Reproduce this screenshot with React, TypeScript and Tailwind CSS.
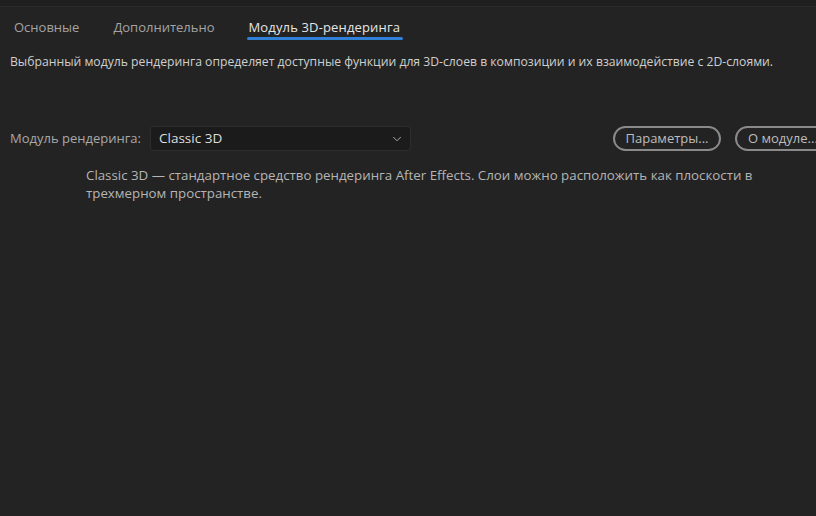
import { ChevronDown } from 'lucide-react'

export default function App() {
  const tabs = ['Основные', 'Дополнительно', 'Модуль 3D-рендеринга']
  const active = 2

  return (
    <div
      className="w-[816px] h-[516px] overflow-hidden bg-[#232323] text-[#c8c8c8]"
      style={{ fontFamily: '"Open Sans", "Noto Sans", sans-serif' }}
    >
      <div className="h-[7px] bg-[#1f1f1f] border-b border-[#2b2b2b]" />
      <nav className="flex gap-[34px] pl-[14px] pt-[10px] h-[34px]">
        {tabs.map((tab, i) => (
          <div
            key={tab}
            className={`text-[13px] leading-[20px] ${
              i === active ? 'text-[#e6e6e6] tracking-[0.15px]' : 'text-[#a3a3a3]'
            }`}
          >
            <div>{tab}</div>
            <div className={`h-[3px] -ml-[1px] -mr-[3px] rounded-full ${i === active ? 'bg-[#2f80d6]' : ''}`} />
          </div>
        ))}
      </nav>
      <p className="pl-[10px] pt-[13px] text-[12.2px] leading-[16px] text-[#cfcfcf] whitespace-nowrap">
        Выбранный модуль рендеринга определяет доступные функции для 3D-слоев в композиции и их взаимодействие с 2D-слоями.
      </p>
      <div className="flex items-center mt-[56px] pl-[10px] h-[25px]">
        <span className="shrink-0 text-[13px] text-[#a8a8a8] w-[140px]">Модуль рендеринга:</span>
        <div className="shrink-0 flex items-center justify-between w-[261px] h-[25px] rounded-[4px] bg-[#1b1b1b] border border-[#2e2e2e] pl-[8px] pr-[6px]">
          <span className="text-[13.5px] text-[#dedede]">Classic 3D</span>
          <ChevronDown size={14} strokeWidth={1.5} className="text-[#bdbdbd]" />
        </div>
        <button className="shrink-0 ml-[202px] h-[25px] w-[108px] rounded-full border-2 border-[#8a8a8a] text-[13px] text-[#bdbdbd]">
          Параметры...
        </button>
        <button className="shrink-0 ml-[14px] h-[25px] w-[100px] rounded-full border-2 border-[#8a8a8a] text-[13px] text-[#bdbdbd] text-left pl-[11px]">
          О модуле...
        </button>
      </div>
      <p className="pl-[86px] pr-[40px] pt-[15px] text-[13.3px] leading-[18px] text-[#b5b5b5]">
        Classic 3D — стандартное средство рендеринга After Effects. Слои можно расположить как плоскости в
        трехмерном пространстве.
      </p>
    </div>
  )
}
